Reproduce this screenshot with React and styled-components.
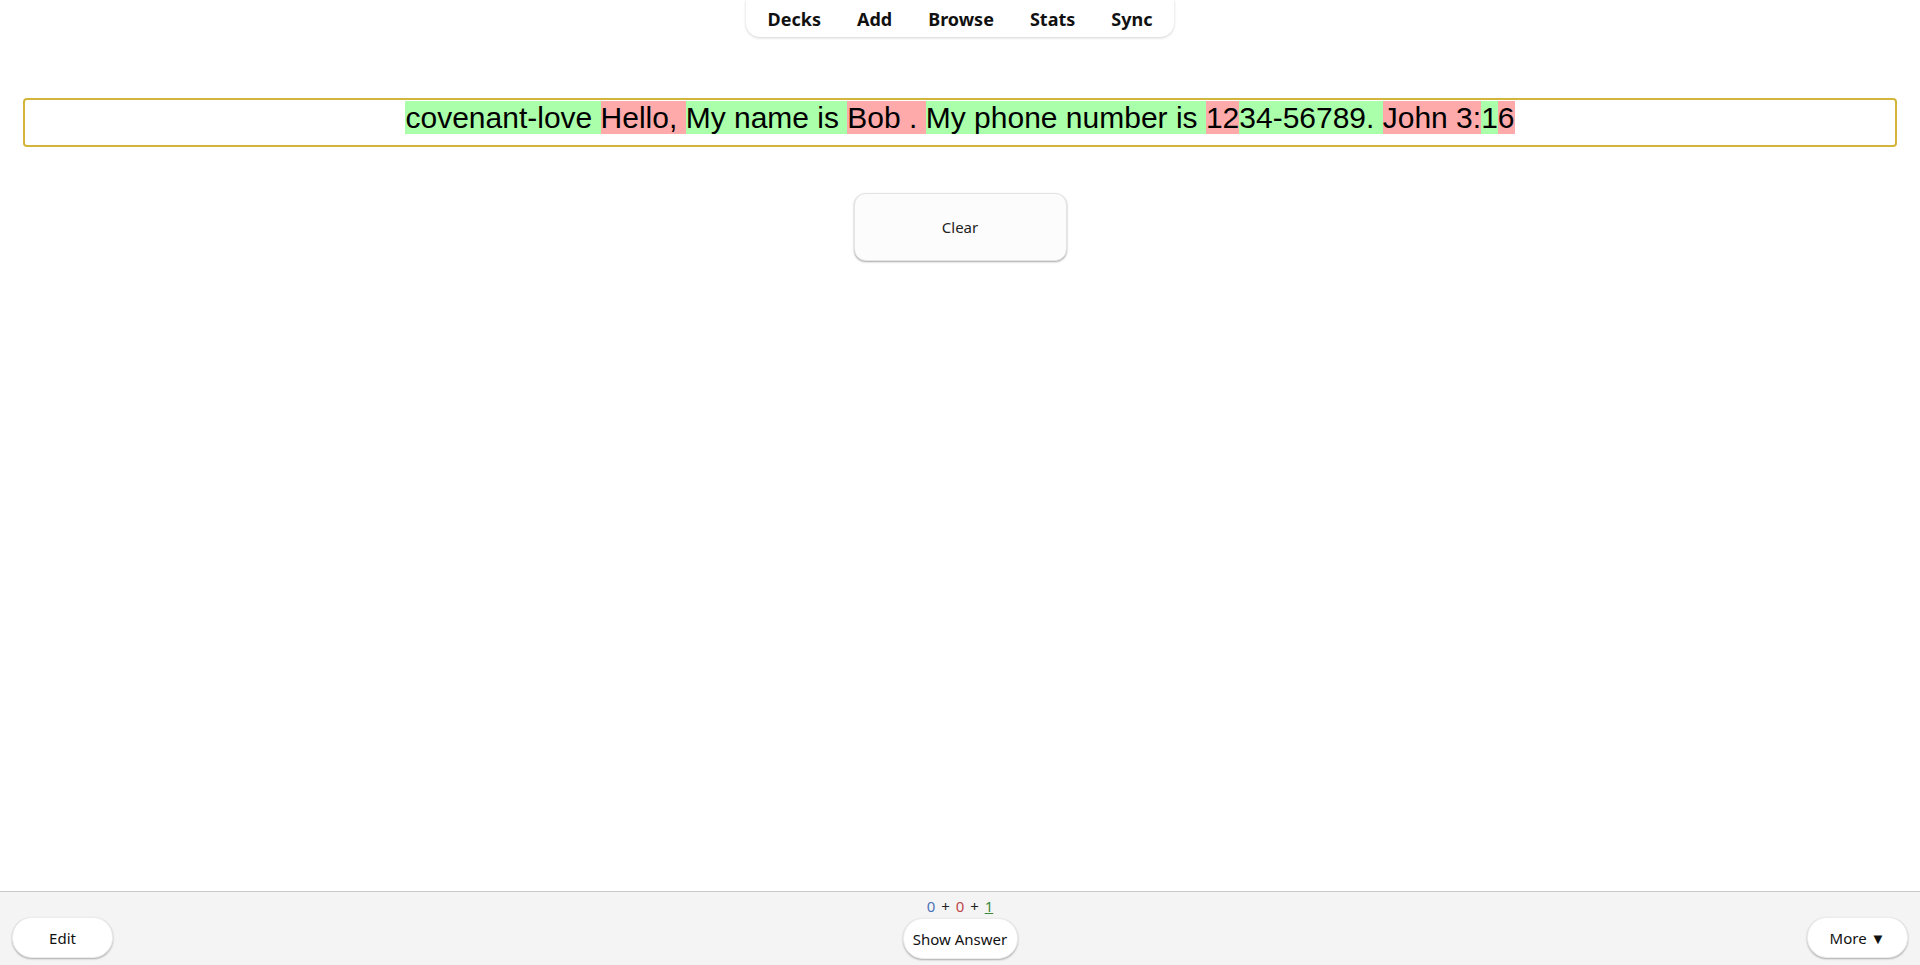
import React from 'react';
import styled, { createGlobalStyle } from 'styled-components';

const Global = createGlobalStyle`
  html, body {
    margin: 0;
    padding: 0;
    background: #fff;
  }
  body {
    font-family: "Noto Sans", "Open Sans", sans-serif;
    color: #111;
  }
`;

const Page = styled.div`
  height: 100vh;
  display: flex;
  flex-direction: column;
`;

const Main = styled.div`
  flex: 1;
  display: flex;
  flex-direction: column;
  align-items: center;
`;

const TopNav = styled.nav`
  display: flex;
  height: 37px;
  padding: 0 4px;
  background: #fff;
  border-radius: 0 0 14px 14px;
  box-shadow: 0 1px 3px rgba(0, 0, 0, 0.18);
`;

const NavItem = styled.a`
  display: flex;
  align-items: center;
  padding: 0 18px;
  font-size: 18px;
  font-weight: 700;
  color: #111;
  cursor: pointer;
`;

const AnswerBox = styled.div`
  box-sizing: border-box;
  align-self: stretch;
  margin: 61px 23px 0;
  height: 49px;
  padding-top: 1px;
  border: 2px solid #d3b53c;
  border-radius: 4px;
  text-align: center;
  font-family: "Liberation Sans", Arial, sans-serif;
  font-size: 30px;
  line-height: 34px;
  color: #000;
  white-space: pre;
`;

const Part = styled.span`
  background: ${(p) => (p.$good ? '#afa' : '#faa')};
`;

const ClearButton = styled.button`
  margin-top: 46px;
  width: 213px;
  height: 68px;
  background: #fcfcfc;
  border: 1px solid #e4e4e4;
  border-radius: 12px;
  box-shadow: 0 1px 2px rgba(0, 0, 0, 0.35);
  font-family: "Noto Sans", "Open Sans", sans-serif;
  font-size: 15px;
  color: #222;
  cursor: pointer;
`;

const BottomBar = styled.div`
  height: 74px;
  box-sizing: border-box;
  border-top: 1px solid #c9c9c9;
  background: #f4f4f4;
  display: grid;
  grid-template-columns: 1fr auto 1fr;
  align-items: end;
  padding: 0 12px 6px;
`;

const Center = styled.div`
  display: flex;
  flex-direction: column;
  align-items: center;
`;

const Counts = styled.div`
  font-size: 15px;
  line-height: 24px;
  color: #222;
  word-spacing: 2px;
`;

const Count = styled.span`
  color: ${(p) => p.$color};
  text-decoration: ${(p) => (p.$underline ? 'underline' : 'none')};
`;

const PillButton = styled.button`
  justify-self: ${(p) => p.$side || 'center'};
  width: ${(p) => p.$width}px;
  height: 41px;
  background: #fff;
  border: 1px solid #ececec;
  border-radius: 20px;
  box-shadow: 0 1px 2px rgba(0, 0, 0, 0.3);
  font-family: "Noto Sans", "Open Sans", sans-serif;
  font-size: 15px;
  color: #111;
  cursor: pointer;
  margin-bottom: ${(p) => p.$lift || 0}px;
`;

const segments = [
  ['covenant-love ', true],
  ['Hello, ', false],
  ['My name is ', true],
  ['Bob . ', false],
  ['My phone number is ', true],
  ['12', false],
  ['34-56789. ', true],
  ['John 3:', false],
  ['1', true],
  ['6', false],
];

export default function App() {
  return (
    <Page>
      <Global />
      <Main>
        <TopNav>
          {['Decks', 'Add', 'Browse', 'Stats', 'Sync'].map((n) => (
            <NavItem key={n}>{n}</NavItem>
          ))}
        </TopNav>
        <AnswerBox>
          {segments.map(([t, good], i) => (
            <Part key={i} $good={good}>{t}</Part>
          ))}
        </AnswerBox>
        <ClearButton>Clear</ClearButton>
      </Main>
      <BottomBar>
        <PillButton $side="start" $width={101} $lift={1}>Edit</PillButton>
        <Center>
          <Counts>
            <Count $color="#4b73b8">0</Count> + <Count $color="#c0474b">0</Count> +{' '}
            <Count $color="#3c8a3c" $underline>1</Count>
          </Counts>
          <PillButton $width={115}>Show Answer</PillButton>
        </Center>
        <PillButton $side="end" $width={101} $lift={1}>More ▼</PillButton>
      </BottomBar>
    </Page>
  );
}
